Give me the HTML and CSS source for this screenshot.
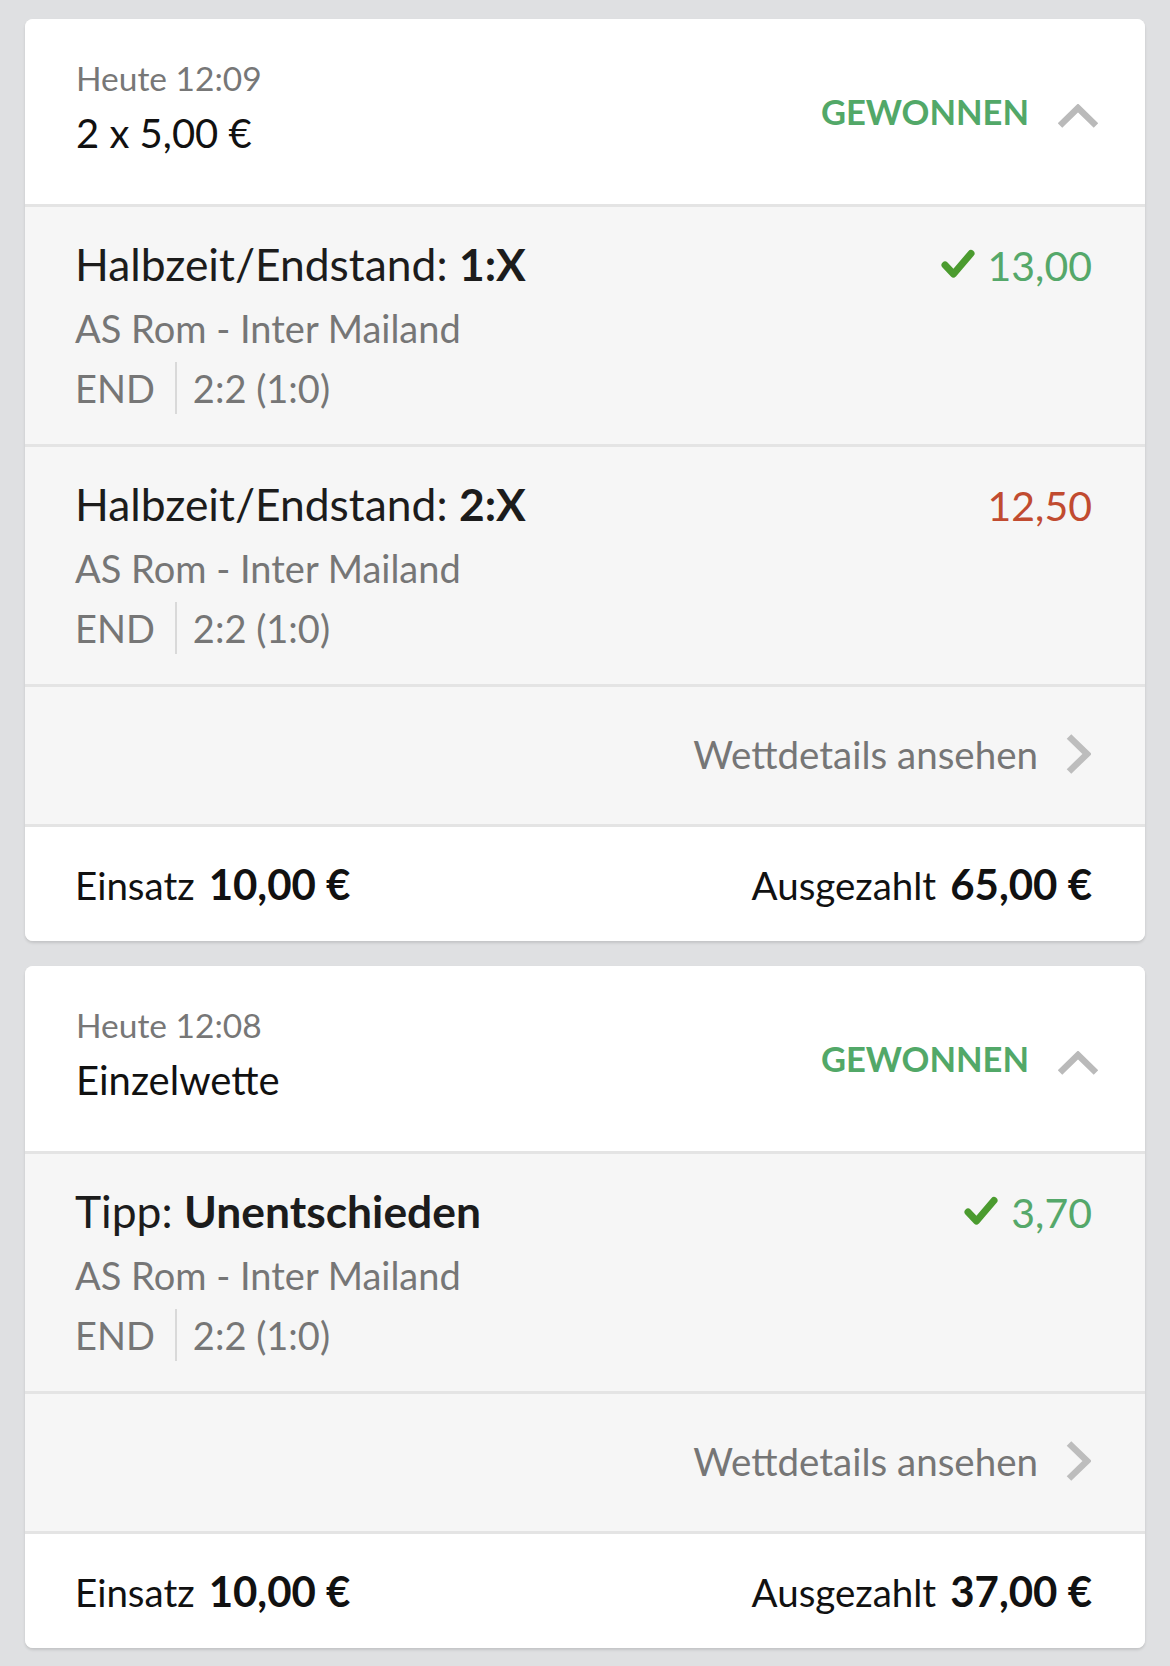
FILE: index.html
```html
<!DOCTYPE html>
<html lang="de">
<head>
  <meta charset="UTF-8" />
  <meta name="viewport" content="width=device-width, initial-scale=1" />
  <title>Meine Wetten</title>
  <link rel="stylesheet" href="styles.css">
</head>
<body>
  <main class="bet-list">

    <section class="bet-card">
      <header class="bet-head">
        <div class="bet-head-info">
          <div class="bet-time">Heute 12:09</div>
          <div class="bet-type">2 x 5,00 €</div>
        </div>
        <div class="bet-status">
          <span class="status-won">GEWONNEN</span>
          <svg class="chevron-up" width="40" height="24" viewBox="0 0 40 24">
            <polyline points="2,21.5 20,4 38,21.5" fill="none" stroke="currentColor" stroke-width="6.5" />
          </svg>
        </div>
      </header>

      <div class="selection">
        <div class="selection-top">
          <div class="selection-title">Halbzeit/Endstand: <b>1:X</b></div>
          <div class="odds won">
            <svg class="check" width="34" height="30" viewBox="0 0 34 30">
              <polyline points="4,16 12.5,25 30,4.5" fill="none" stroke="currentColor" stroke-width="7" stroke-linecap="round" stroke-linejoin="round" />
            </svg>
            13,00
          </div>
        </div>
        <div class="selection-match">AS Rom - Inter Mailand</div>
        <div class="selection-result">
          <span>END</span>
          <span class="result-divider"></span>
          <span>2:2 (1:0)</span>
        </div>
      </div>

      <div class="selection">
        <div class="selection-top">
          <div class="selection-title">Halbzeit/Endstand: <b>2:X</b></div>
          <div class="odds lost">12,50</div>
        </div>
        <div class="selection-match">AS Rom - Inter Mailand</div>
        <div class="selection-result">
          <span>END</span>
          <span class="result-divider"></span>
          <span>2:2 (1:0)</span>
        </div>
      </div>

      <a class="bet-details" href="#">
        <span>Wettdetails ansehen</span>
        <svg class="chevron-right" width="25" height="40" viewBox="0 0 25 40">
          <polyline points="3,2.5 21,20 3,37.5" fill="none" stroke="currentColor" stroke-width="6.5" />
        </svg>
      </a>

      <footer class="bet-foot">
        <div>Einsatz<strong>10,00 €</strong></div>
        <div>Ausgezahlt<strong>65,00 €</strong></div>
      </footer>
    </section>

    <section class="bet-card">
      <header class="bet-head">
        <div class="bet-head-info">
          <div class="bet-time">Heute 12:08</div>
          <div class="bet-type">Einzelwette</div>
        </div>
        <div class="bet-status">
          <span class="status-won">GEWONNEN</span>
          <svg class="chevron-up" width="40" height="24" viewBox="0 0 40 24">
            <polyline points="2,21.5 20,4 38,21.5" fill="none" stroke="currentColor" stroke-width="6.5" />
          </svg>
        </div>
      </header>

      <div class="selection">
        <div class="selection-top">
          <div class="selection-title">Tipp: <b>Unentschieden</b></div>
          <div class="odds won">
            <svg class="check" width="34" height="30" viewBox="0 0 34 30">
              <polyline points="4,16 12.5,25 30,4.5" fill="none" stroke="currentColor" stroke-width="7" stroke-linecap="round" stroke-linejoin="round" />
            </svg>
            3,70
          </div>
        </div>
        <div class="selection-match">AS Rom - Inter Mailand</div>
        <div class="selection-result">
          <span>END</span>
          <span class="result-divider"></span>
          <span>2:2 (1:0)</span>
        </div>
      </div>

      <a class="bet-details" href="#">
        <span>Wettdetails ansehen</span>
        <svg class="chevron-right" width="25" height="40" viewBox="0 0 25 40">
          <polyline points="3,2.5 21,20 3,37.5" fill="none" stroke="currentColor" stroke-width="6.5" />
        </svg>
      </a>

      <footer class="bet-foot">
        <div>Einsatz<strong>10,00 €</strong></div>
        <div>Ausgezahlt<strong>37,00 €</strong></div>
      </footer>
    </section>

  </main>
</body>
</html>
```

FILE: styles.css
```css
body {
  margin: 0;
  font-family: Lato, "Open Sans", sans-serif;
  background: #dfe0e2;
  color: #141414;
}
.bet-list {
  display: flex;
  flex-direction: column;
  gap: 25px;
  padding: 19px 25px 20px;
}
/* Card */
.bet-card {
  background: #f6f6f6;
  border-radius: 8px;
  box-shadow: 0 2px 3px rgba(0,0,0,0.13);
  overflow: hidden;
}
.bet-head {
  display: flex;
  justify-content: space-between;
  align-items: center;
  background: #fff;
  height: 185px;
  box-sizing: border-box;
  padding: 0 47px 0 51px;
}
.bet-head-info {
  align-self: flex-start;
  padding-top: 39px;
}
.bet-time {
  font-size: 33.5px;
  line-height: 40px;
  color: #777;
}
.bet-type {
  font-size: 40px;
  line-height: 58px;
  margin-top: 6px;
  color: #111;
}
.bet-status {
  display: flex;
  align-items: center;
}
.status-won {
  font-size: 34.5px;
  font-weight: 700;
  color: #52a868;
}
.chevron-up {
  color: #bababa;
  margin: 8px 0 0 29px;
}
/* Selections */
.selection {
  border-top: 3px solid #e4e4e4;
  padding: 26px 53px 26px 50px;
}
.selection-top {
  display: flex;
  justify-content: space-between;
  align-items: baseline;
  height: 62px;
}
.selection-title {
  font-size: 44.4px;
  line-height: 62px;
  color: #1c1c1c;
}
.selection-title b {
  font-weight: 700;
}
.odds {
  font-size: 41px;
  line-height: 62px;
  display: flex;
  align-items: baseline;
}
.odds.won {
  color: #55a86a;
}
.odds.lost {
  color: #c14b30;
}
.check {
  color: #4b9b2f;
  margin-right: 13px;
  align-self: center;
  position: relative;
  top: -2px;
}
.selection-match,
.selection-result {
  font-size: 38px;
  line-height: 60px;
  color: #767676;
}
.selection-match {
  margin-top: 3px;
}
.selection-result {
  display: flex;
  align-items: center;
}
.result-divider {
  width: 2px;
  height: 52px;
  background: #d9d9d9;
  margin: 0 16px 0 20px;
}
/* Details link */
.bet-details {
  display: flex;
  justify-content: flex-end;
  align-items: center;
  gap: 28px;
  height: 140px;
  box-sizing: border-box;
  border-top: 3px solid #e4e4e4;
  padding: 0 54px 4px 50px;
  font-size: 38.5px;
  color: #767676;
  text-decoration: none;
}
.chevron-right {
  color: #bdbdbd;
}
/* Footer */
.bet-foot {
  display: flex;
  justify-content: space-between;
  align-items: center;
  height: 117px;
  box-sizing: border-box;
  border-top: 3px solid #e4e4e4;
  background: #fff;
  padding: 0 53px 0 50px;
  font-size: 38.5px;
  color: #111;
}
.bet-foot strong {
  font-size: 42px;
  font-weight: 700;
  margin-left: 14px;
}
```
